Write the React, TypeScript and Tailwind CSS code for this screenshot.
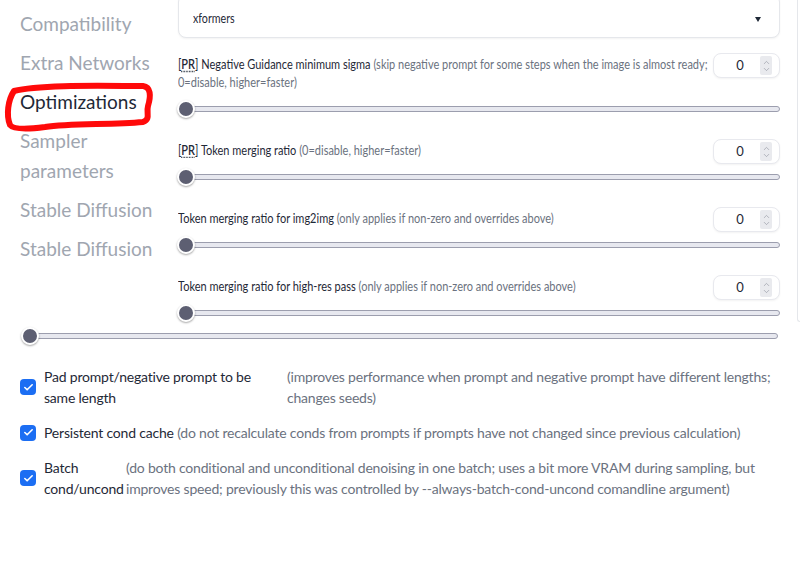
import { Check, ChevronUp, ChevronDown } from 'lucide-react';

const font = "font-['Lato','Liberation_Sans',sans-serif]";

const Slider = () => (
  <div className="relative flex h-4 items-center">
    <div className="h-[6px] w-full rounded-full border border-[#9c9eae] bg-[#e7e8ef]" />
    <div className="absolute -left-[1px] top-[-1px] size-[18px] rounded-full border-2 border-white bg-[#5d5f72] shadow-[0_1px_2px_rgba(0,0,0,0.35)]" />
  </div>
);

const NumberBox = () => (
  <div className="-mb-[5px] flex h-[25px] w-[67px] shrink-0 items-center rounded-lg border border-[#e8e9ee] bg-white shadow-[0_1px_2px_rgba(0,0,0,0.05)]">
    <span className="flex-1 pl-[6px] text-center text-[13px] text-[#1f2937]">0</span>
    <div className="mr-[7px] flex h-[19px] w-[12px] flex-col items-center justify-center rounded-[2px] bg-[#e9eaee] text-[#8d909c]">
      <ChevronUp size={9} strokeWidth={1.6} className="-mb-[1px]" />
      <ChevronDown size={9} strokeWidth={1.6} className="-mt-[1px]" />
    </div>
  </div>
);

interface SettingRowProps {
  lines: React.ReactNode[];
}

const SettingRow = ({ lines }: SettingRowProps) => (
  <div>
    <div className="flex items-start">
      <div className="min-w-0 flex-1 pt-[2px]">
        <div className="origin-left scale-x-[0.785] whitespace-nowrap text-[14px] leading-[18px] text-[#1f2937]">
          {lines.map((l, i) => (
            <div key={i}>{l}</div>
          ))}
        </div>
      </div>
      <NumberBox />
    </div>
    <div className="mt-[10px]">
      <Slider />
    </div>
  </div>
);

const PR = () => (
  <>
    [<span className="font-semibold underline decoration-dotted underline-offset-2">PR</span>]
  </>
);

const Info = ({ children }: { children: React.ReactNode }) => (
  <span className="text-[#6b7280]">{children}</span>
);

const CheckBox = () => (
  <div className="flex size-4 shrink-0 items-center justify-center rounded-[4px] bg-[#1c6ef3]">
    <Check size={11} strokeWidth={3.5} className="text-white" />
  </div>
);

export default function App() {
  return (
    <div className={`relative h-[568px] w-[800px] overflow-hidden bg-white ${font}`}>
      <div className="flex">
        {/* Menu de gauche */}
        <aside className="w-[178px] shrink-0 pl-5 pt-[9px] text-[19px] leading-[30px] text-[#a0a6b0]">
          <div className="flex flex-col gap-[9px]">
            <div>Compatibility</div>
            <div>Extra Networks</div>
            <div className="text-[#1f2937]">Optimizations</div>
            <div>
              <div>Sampler</div>
              <div>parameters</div>
            </div>
            <div>Stable Diffusion</div>
            <div>Stable Diffusion</div>
          </div>
        </aside>

        {/* Réglages */}
        <main className="w-[602px] shrink-0">
          <div className="-mt-[6px] flex h-[44px] items-center justify-between rounded-lg border border-[#e5e7eb] bg-white pl-[14px] pr-[18px] pt-[6px] shadow-[0_1px_2px_rgba(0,0,0,0.05)]">
            <span className="origin-left scale-x-[0.82] text-[13px] text-[#1f2937]">xformers</span>
            <span className="h-0 w-0 border-x-[3.5px] border-t-[5px] border-x-transparent border-t-[#1f2937]" />
          </div>

          <div className="mt-[15px] flex flex-col gap-[22px]">
            <SettingRow
              lines={[
                <>
                  <PR /> Negative Guidance minimum sigma{' '}
                  <Info>(skip negative prompt for some steps when the image is almost ready;</Info>
                </>,
                <Info>0=disable, higher=faster)</Info>,
              ]}
            />
            <SettingRow
              lines={[
                <>
                  <PR /> Token merging ratio <Info>(0=disable, higher=faster)</Info>
                </>,
              ]}
            />
            <SettingRow
              lines={[
                <>
                  Token merging ratio for img2img <Info>(only applies if non-zero and overrides above)</Info>
                </>,
              ]}
            />
            <SettingRow
              lines={[
                <>
                  Token merging ratio for high-res pass{' '}
                  <Info>(only applies if non-zero and overrides above)</Info>
                </>,
              ]}
            />
          </div>
        </main>

        <div className="ml-[17px] h-[322px] flex-1 rounded-bl-lg border-b border-l border-[#e5e7eb]" />
      </div>

      <div className="mt-[6px] px-[22px]">
        <Slider />
      </div>

      {/* Cases à cocher */}
      <div className="mt-[22px] flex flex-col gap-[14px] pl-5 text-[14px] leading-[21px] tracking-[-0.2px] text-[#1f2937]">
        <div className="flex items-center">
          <CheckBox />
          <div className="ml-2 w-[243px] shrink-0">
            <div>Pad prompt/negative prompt to be</div>
            <div>same length</div>
          </div>
          <div className="whitespace-nowrap text-[#6b7280]">
            <div>(improves performance when prompt and negative prompt have different lengths;</div>
            <div>changes seeds)</div>
          </div>
        </div>
        <div className="flex items-center">
          <CheckBox />
          <div className="ml-2 whitespace-nowrap">
            Persistent cond cache{' '}
            <Info>(do not recalculate conds from prompts if prompts have not changed since previous calculation)</Info>
          </div>
        </div>
        <div className="flex items-center">
          <CheckBox />
          <div className="ml-2 w-[82px] shrink-0">
            <div>Batch</div>
            <div>cond/uncond</div>
          </div>
          <div className="whitespace-nowrap text-[#6b7280]">
            <div>(do both conditional and unconditional denoising in one batch; uses a bit more VRAM during sampling, but</div>
            <div>improves speed; previously this was controlled by --always-batch-cond-uncond comandline argument)</div>
          </div>
        </div>
      </div>

      {/* Annotation rouge */}
      <svg className="pointer-events-none absolute left-0 top-0" width="800" height="568" fill="none">
        <path
          d="M14 91 C40 84 110 86 143 86 C151 87 151 96 148 106 C146 113 151 119 143 122 C110 125 70 123 45 127 C30 129 14 130 10 125 C6 115 8 100 14 91 Z"
          stroke="#ff0a0a"
          strokeWidth="6"
          strokeLinejoin="round"
        />
      </svg>
    </div>
  );
}
